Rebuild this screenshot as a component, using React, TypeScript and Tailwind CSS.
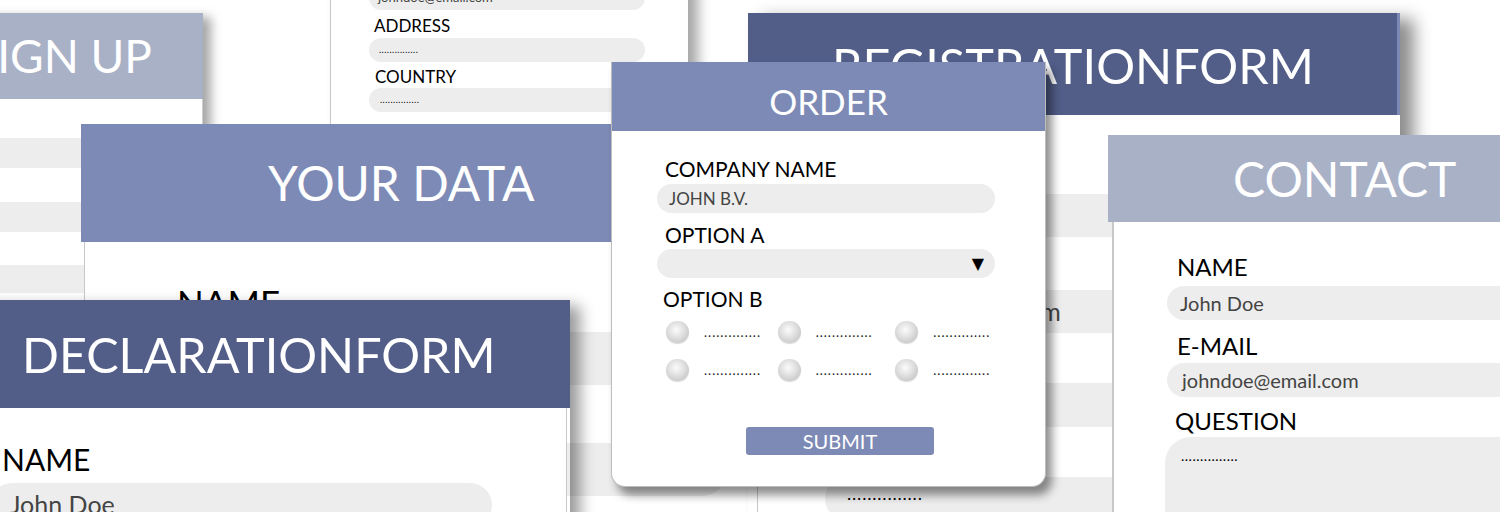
import React from "react";

function Radio() {
  return (
    <div className="w-[23px] h-[22px] rounded-full bg-[radial-gradient(circle_at_45%_40%,#fbfbfb_0%,#e2e2e2_40%,#b8b8b8_100%)] shadow-[0_1px_1px_rgba(0,0,0,0.15)] shrink-0" />
  );
}

function RadioItem({ w }: { w: string }) {
  return (
    <div className={`flex items-center ${w}`}>
      <Radio />
      <span className="ml-[15px] text-[13px] leading-none tracking-[1px] text-[#222]">
        ..............
      </span>
    </div>
  );
}

export default function App() {
  return (
    <div className="relative w-[1500px] h-[512px] overflow-hidden bg-white font-[Lato,sans-serif] text-black">
      {/* SIGN UP (back) */}
      <div className="absolute left-[-90px] top-[13px] w-[293px] z-[1] shadow-[8px_4px_10px_rgba(0,0,0,0.35)]">
        <div className="h-[86px] bg-[#a9b1c7] flex items-center justify-end pr-[51px]">
          <span className="text-white text-[46px] leading-none font-normal">SIGN UP</span>
        </div>
        <div className="h-[320px] bg-white border-r border-[#cfcfcf] pt-[39px] flex flex-col">
          <div className="ml-[40px] w-[230px] h-[30px] rounded-full bg-[#ededed]" />
          <div className="mt-[34px] ml-[40px] w-[230px] h-[30px] rounded-full bg-[#ededed]" />
          <div className="mt-[33px] ml-[40px] w-[230px] h-[28px] rounded-full bg-[#ededed]" />
        </div>
      </div>

      {/* Top-middle card */}
      <div className="absolute left-[330px] top-[-50px] w-[358px] h-[260px] z-[2] bg-white border-l border-[#c8c8c8] shadow-[10px_4px_12px_rgba(0,0,0,0.35)] pt-[36px] pl-[38px] pr-[43px] flex flex-col">
        <div className="h-[24px] shrink-0 rounded-full bg-[#ededed] flex items-center pl-[9px] text-[13px] text-[#444]">
          johndoe@email.com
        </div>
        <div className="h-[28px] shrink-0 flex items-center pt-[4px] pl-[5px] text-[17px]">ADDRESS</div>
        <div className="h-[24px] shrink-0 rounded-full bg-[#ededed] flex items-center pl-[10px] text-[9px] tracking-[0.5px]">
          ...............
        </div>
        <div className="h-[26px] shrink-0 flex items-center pt-[3px] pl-[6px] text-[17px]">COUNTRY</div>
        <div className="h-[24px] shrink-0 rounded-full bg-[#ededed] flex items-center pl-[11px] text-[9px] tracking-[0.5px]">
          ...............
        </div>
      </div>

      {/* REGISTRATIONFORM */}
      <div className="absolute left-[748px] top-[13px] w-[652px] z-[3] shadow-[14px_6px_16px_rgba(0,0,0,0.45)]">
        <div className="h-[102px] bg-[#525e88] border-r-[3px] border-[#7d8ab6] flex items-center pl-[84px] pt-[2px]">
          <span className="text-white text-[48.6px] leading-none font-normal">REGISTRATIONFORM</span>
        </div>
        <div className="ml-[9px] h-[500px] bg-white border-l border-[#c8c8c8] pt-[79px] pl-[67px] pr-[20px] flex flex-col">
          <div className="h-[43px] shrink-0 rounded-full bg-[#ededed]" />
          <div className="h-[53px] shrink-0" />
          <div className="h-[43px] shrink-0 rounded-full bg-[#ededed] flex items-center pl-[15px] text-[25px] text-[#444]">
            johndoe@email.com
          </div>
          <div className="h-[50px] shrink-0" />
          <div className="h-[44px] shrink-0 rounded-full bg-[#ededed]" />
          <div className="h-[50px] shrink-0" />
          <div className="h-[43px] shrink-0 rounded-full bg-[#ededed] flex items-start pt-[3px] pl-[22px] text-[18px] tracking-[0.8px]">
            ...............
          </div>
        </div>
      </div>

      {/* YOUR DATA */}
      <div className="absolute left-[81px] top-[124px] w-[664px] z-[4]">
        <div className="h-[118px] bg-[#7d8ab6] flex items-center pl-[187px]">
          <span className="text-white text-[48px] leading-none font-normal">YOUR DATA</span>
        </div>
        <div className="ml-[3px] h-[300px] bg-white border-l border-[#c8c8c8] pt-[43px] pl-[86px] flex flex-col">
          <div className="h-[35px] text-[35px] leading-[35px] pl-[6px]">NAME</div>
          <div className="mt-[12px] h-[53px] w-[557px] rounded-full bg-[#ededed]" />
          <div className="h-[58px]" />
          <div className="h-[53px] w-[557px] rounded-full bg-[#ededed]" />
        </div>
      </div>

      {/* DECLARATIONFORM */}
      <div className="absolute left-[-40px] top-[300px] w-[610px] z-[5] shadow-[10px_6px_14px_rgba(0,0,0,0.4)]">
        <div className="h-[108px] bg-[#525e88] flex items-center pl-[62px]">
          <span className="text-white text-[48.5px] leading-none font-normal">DECLARATIONFORM</span>
        </div>
        <div className="mr-[3px] h-[200px] bg-white border-r border-[#c8c8c8] pt-[35px] flex flex-col">
          <div className="h-[32px] flex items-center pl-[42px] text-[30px]">NAME</div>
          <div className="mt-[8px] ml-[30px] w-[502px] h-[44px] rounded-full bg-[#ededed] flex items-center pl-[20px] text-[25px] text-[#444]">
            John Doe
          </div>
        </div>
      </div>

      {/* ORDER */}
      <div className="absolute left-[611px] top-[62px] w-[435px] h-[425px] z-[6] bg-white rounded-b-[14px] border border-t-0 border-[#bdbdbd] shadow-[6px_8px_10px_rgba(0,0,0,0.45)] flex flex-col">
        <div className="h-[69px] shrink-0 bg-[#7d8ab6] flex items-center justify-center pt-[10px]">
          <span className="text-white text-[35px] leading-none font-normal">ORDER</span>
        </div>
        <div className="pt-[26px] pl-[45px] pr-[50px] flex flex-col">
          <div className="h-[24px] flex items-center pl-[8px] text-[21px]">COMPANY NAME</div>
          <div className="mt-[3px] h-[29px] rounded-full bg-[#ededed] flex items-center pl-[12px] text-[17px] text-[#444]">
            JOHN B.V.
          </div>
          <div className="mt-[10px] h-[24px] flex items-center pl-[8px] text-[21px]">OPTION A</div>
          <div className="mt-[2px] h-[29px] rounded-full bg-[#ededed] flex items-center justify-end pr-[11px] text-[16px] font-[DejaVu_Sans,sans-serif]">
            ▼
          </div>
          <div className="mt-[9px] h-[24px] flex items-center pl-[6px] text-[21px]">OPTION B</div>
          <div className="mt-[9px] h-[24px] flex items-center pl-[9px]">
            <RadioItem w="w-[112px]" />
            <RadioItem w="w-[118px]" />
            <RadioItem w="w-[100px]" />
          </div>
          <div className="mt-[14px] h-[24px] flex items-center pl-[9px]">
            <RadioItem w="w-[112px]" />
            <RadioItem w="w-[118px]" />
            <RadioItem w="w-[100px]" />
          </div>
          <button className="mt-[45px] ml-[89px] w-[188px] h-[28px] bg-[#7d8ab6] rounded-[3px] text-white text-[20px] leading-none flex items-center justify-center">
            SUBMIT
          </button>
        </div>
      </div>

      {/* CONTACT */}
      <div className="absolute left-[1108px] top-[135px] w-[420px] z-[7]">
        <div className="h-[87px] bg-[#a9b1c7] flex items-center pl-[125px]">
          <span className="text-white text-[48px] leading-none font-normal">CONTACT</span>
        </div>
        <div className="ml-[4px] h-[400px] bg-white border-l-2 border-[#c8c8c8] pt-[33px] pl-[53px] flex flex-col">
          <div className="h-[24px] flex items-center pl-[10px] text-[24px]">NAME</div>
          <div className="mt-[7px] h-[34px] rounded-l-full bg-[#ededed] flex items-center pl-[13px] text-[20px] text-[#444]">
            John Doe
          </div>
          <div className="mt-[14px] h-[24px] flex items-center pl-[10px] text-[24px]">E-MAIL</div>
          <div className="mt-[5px] h-[34px] rounded-l-full bg-[#ededed] flex items-center pl-[15px] text-[20px] text-[#444]">
            johndoe@email.com
          </div>
          <div className="mt-[12px] h-[24px] flex items-center pl-[8px] text-[24px]">QUESTION</div>
          <div className="mt-[4px] -ml-[2px] h-[140px] rounded-l-[26px] bg-[#ededed] pt-[12px] pl-[16px] text-[14px] tracking-[0.5px] leading-none">
            ...............
          </div>
        </div>
      </div>
    </div>
  );
}
